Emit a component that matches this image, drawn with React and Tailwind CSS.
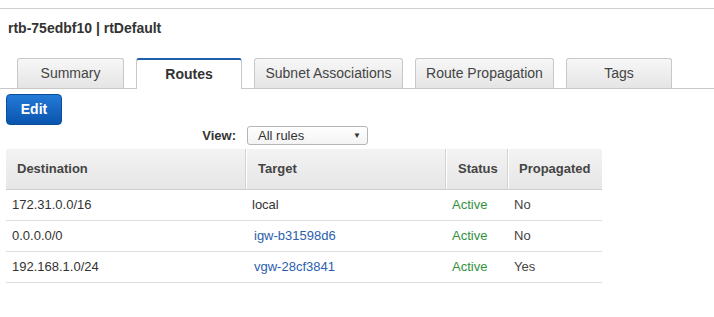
import React from "react";

const font = { fontFamily: '"Liberation Sans", Arial, sans-serif' };

function Tab({ label, width, active }) {
  if (active) {
    return (
      <div
        className={`h-[31px] -mb-px bg-white border-x border-[#c8c8c8] border-t-2 border-t-[#1f5ea9] rounded-t-[3px] flex items-center justify-center text-[14px] font-bold text-[#333]`}
        style={{ width }}
      >
        {label}
      </div>
    );
  }
  return (
    <div
      className="h-[30px] bg-gradient-to-b from-[#f7f7f7] to-[#e5e5e5] border border-b-0 border-[#c8c8c8] rounded-t-[3px] flex items-center justify-center text-[14px] text-[#444]"
      style={{ width }}
    >
      {label}
    </div>
  );
}

const rows = [
  { dest: "172.31.0.0/16", target: "local", link: false, status: "Active", prop: "No" },
  { dest: "0.0.0.0/0", target: "igw-b31598d6", link: true, status: "Active", prop: "No" },
  { dest: "192.168.1.0/24", target: "vgw-28cf3841", link: true, status: "Active", prop: "Yes" },
];

export default function App() {
  return (
    <div className="w-[714px] h-[317px] bg-white text-[#333] overflow-hidden" style={font}>
      <div className="h-[8px]" />
      <div className="border-t border-[#cfcfcf]" />
      <div className="pl-[8px] pt-[11px] h-[49px] text-[14px] leading-[16px] font-bold text-[#333]">
        rtb-75edbf10 | rtDefault
      </div>
      <div className="flex items-end gap-[12px] pl-[17px] border-b border-[#c8c8c8] h-[31px]">
        <Tab label="Summary" width={107} />
        <Tab label="Routes" width={106} active />
        <Tab label="Subnet Associations" width={149} />
        <Tab label="Route Propagation" width={139} />
        <Tab label="Tags" width={106} />
      </div>
      <div className="pl-[6px] pt-[5px]">
        <div className="w-[56px] h-[31px] rounded-[4px] bg-gradient-to-b from-[#237ad6] to-[#0a55ae] border border-[#0b4e9c] flex items-center justify-center text-white font-bold text-[14px]">
          Edit
        </div>
      </div>
      <div className="flex items-center h-[19px] mt-[1px]">
        <div className="w-[236px] text-right text-[13px] font-bold text-[#333]">View:</div>
        <div className="ml-[11px] w-[121px] h-[19px] border border-[#b5b5b5] rounded-[3px] bg-gradient-to-b from-white to-[#f3f3f3] flex items-center justify-between pl-[10px] pr-[6px] text-[13px] text-[#333]">
          <span>All rules</span>
          <span className="text-[8px] leading-none text-[#333]">▼</span>
        </div>
      </div>
      <div className="ml-[6px] mt-[4px] w-[596px]">
        <div className="flex h-[41px] bg-gradient-to-b from-[#f3f3f3] to-[#e6e6e6] border-b border-[#cdcdcd] text-[13px] font-bold text-[#444]">
          <div className="w-[240px] flex items-center pl-[11px] border-r border-[#d2d2d2]">Destination</div>
          <div className="w-[200px] flex items-center pl-[11px] border-r border-[#d2d2d2] border-l border-l-white">Target</div>
          <div className="w-[62px] flex items-center pl-[11px] border-r border-[#d2d2d2] border-l border-l-white">Status</div>
          <div className="w-[94px] flex items-center pl-[10px] border-l border-l-white">Propagated</div>
        </div>
        {rows.map((r) => (
          <div key={r.dest} className="flex h-[31px] border-b border-[#dedede] text-[13px] text-[#333]">
            <div className="w-[240px] flex items-center pl-[6px]">{r.dest}</div>
            <div className={`w-[200px] flex items-center ${r.link ? "pl-[8px] text-[#2b60ad]" : "pl-[6px]"}`}>{r.target}</div>
            <div className="w-[62px] flex items-center pl-[6px] text-[#2f9141]">{r.status}</div>
            <div className="w-[94px] flex items-center pl-[6px] text-[#444]">{r.prop}</div>
          </div>
        ))}
      </div>
    </div>
  );
}
